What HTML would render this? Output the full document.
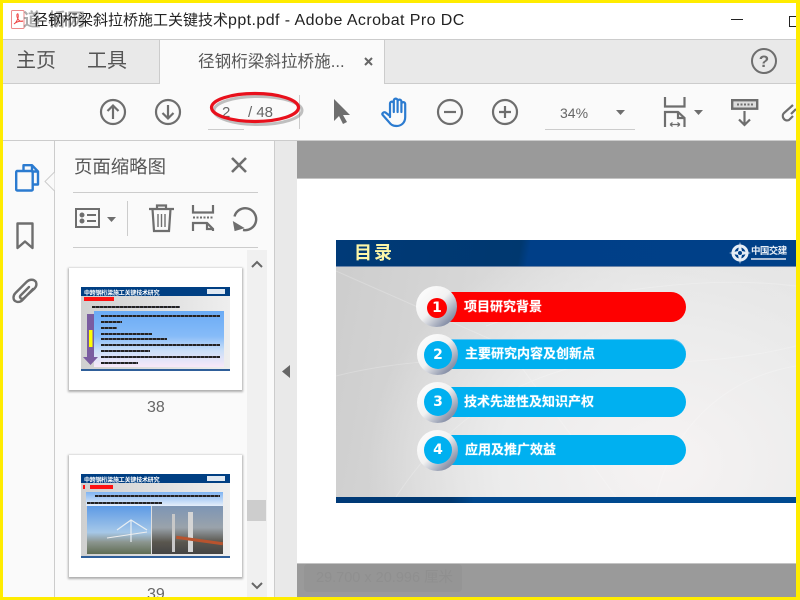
<!DOCTYPE html>
<html><head><meta charset="utf-8">
<style>
html,body{margin:0;padding:0;width:800px;height:600px;overflow:hidden;background:#fafafa}
body{position:relative;font-family:"Liberation Sans","Noto Sans CJK SC",sans-serif;color:#555}
.a{position:absolute;white-space:nowrap}
svg{position:absolute;overflow:visible}
.pill{position:absolute;left:437px;width:249px;height:30px;border-radius:15px;background:#00b0f0}
.ring{position:absolute;left:417px;width:41px;height:41px;border-radius:50%;background:linear-gradient(135deg,#fff 0,#f2f2f2 48%,#8a93aa 82%,#6f7c98 100%)}
.dot{position:absolute;left:424px;width:28px;height:28px;border-radius:50%;background:#00b0f0;color:#fff;font:bold 14px/28px "DejaVu Sans",sans-serif;text-align:center}
.pt{position:absolute;color:#fff;font-weight:bold;font-size:13px;line-height:18px;white-space:nowrap;text-shadow:0 0 1px rgba(255,255,255,.6)}
.l{position:absolute;height:2px;background:repeating-linear-gradient(90deg,#222 0,#222 3px,#556 3px,#556 4px)}
</style></head><body>

<!-- title bar -->
<div class="a" style="left:0;top:0;width:800px;height:39px;background:#fff"></div>
<svg style="left:11px;top:10px" width="14" height="19" fill="none"><rect x=".5" y=".5" width="12.5" height="18" rx="1" stroke="#ee8a8a"/><path d="M3 14C6 12 8 7 7 4C6 3 5 6 7 9C8 11 10 12 12 11C9 11 5 12 3 14Z" stroke="#e44" stroke-width="1"/></svg>
<div class="a" style="left:23px;top:8px;font-size:18px;line-height:24px;color:#777;opacity:.6;letter-spacing:1px;font-weight:bold">道 桥网</div>
<div class="a" style="left:33px;top:10px;font-size:15px;line-height:21px;color:#222">径钢桁梁斜拉桥施工关键技术<span style="font-size:16px;letter-spacing:.42px">ppt.pdf - Adobe Acrobat Pro DC</span></div>
<div class="a" style="left:731px;top:19px;width:12px;height:1px;background:#222"></div>
<div class="a" style="left:789px;top:16px;width:8px;height:9px;border:1px solid #222"></div>

<!-- tab bar -->
<div class="a" style="left:0;top:39px;width:800px;height:45px;background:#e9e9e9;border-top:1px solid #ccc;border-bottom:1px solid #ccc;box-sizing:border-box"></div>
<div class="a" style="left:159px;top:39px;width:226px;height:45px;background:#fafafa;border:1px solid #ccc;border-bottom:0;box-sizing:border-box"></div>
<div class="a" style="left:16px;top:48px;font-size:20px;line-height:26px;color:#555">主页</div>
<div class="a" style="left:87px;top:48px;font-size:20px;line-height:26px;color:#555">工具</div>
<div class="a" style="left:198px;top:51px;font-size:16.6px;line-height:22px;color:#555">径钢桁梁斜拉桥施...</div>
<svg style="left:364px;top:57px" width="9" height="9"><path d="M1 1L8 8M8 1L1 8" stroke="#666" stroke-width="2"/></svg>
<svg style="left:750px;top:47px" width="28" height="28"><circle cx="14" cy="14" r="12" fill="none" stroke="#6e6e6e" stroke-width="2"/><text x="14" y="20" font-size="17" font-weight="bold" text-anchor="middle" fill="#6e6e6e" font-family="Liberation Sans">?</text></svg>

<!-- toolbar -->
<svg style="left:100px;top:98px" width="28" height="28" fill="none" stroke="#6e6e6e" stroke-width="2.2"><circle cx="13" cy="14" r="12"/><path d="M13 21V7.5M7.5 13L13 7.5L18.5 13"/></svg>
<svg style="left:155px;top:98px" width="28" height="28" fill="none" stroke="#6e6e6e" stroke-width="2.2"><circle cx="13" cy="14" r="12"/><path d="M13 7V20.5M7.5 15L13 20.5L18.5 15"/></svg>
<div class="a" style="left:222px;top:104px;font-size:15px;line-height:18px;color:#666">2</div>
<div class="a" style="left:248px;top:104px;font-size:15px;line-height:18px;color:#666">/ 48</div>
<div class="a" style="left:208px;top:129px;width:36px;height:1px;background:#ccc"></div>
<div class="a" style="left:299px;top:95px;width:1px;height:34px;background:#ccc"></div>
<svg style="left:205px;top:88px" width="105" height="46"><ellipse cx="53" cy="22.5" rx="44" ry="14" fill="none" stroke="#666" stroke-width="3" opacity=".4"/><ellipse cx="50" cy="19.5" rx="43.5" ry="14" fill="none" stroke="#e8101c" stroke-width="3.2"/></svg>
<svg style="left:333px;top:98px" width="18" height="28"><path d="M1 1V23L6 18L10 26L14 24L10 17H17Z" fill="#6e6e6e"/></svg>
<svg style="left:381px;top:97px" width="30" height="32" fill="none" stroke="#2b7bd0" stroke-width="2.2" stroke-linecap="round" stroke-linejoin="round"><path d="M9 20V6.5a1.9 1.9 0 0 1 3.8 0V15M12.8 15V3.5a1.9 1.9 0 0 1 3.8 0V15M16.6 15V4.5a1.9 1.9 0 0 1 3.8 0V15M20.4 15V7a1.9 1.9 0 0 1 3.8 0V20C24.2 26 20 29 15.5 29C11 29 9.5 27 7.5 24.5L1.7 18C.5 16.5 2.7 14.5 4.5 15.5L9 19"/></svg>
<svg style="left:437px;top:98px" width="28" height="28" fill="none" stroke="#6e6e6e" stroke-width="2.2"><circle cx="13" cy="14" r="12"/><path d="M7 14H19"/></svg>
<svg style="left:492px;top:98px" width="28" height="28" fill="none" stroke="#6e6e6e" stroke-width="2.2"><circle cx="13" cy="14" r="12"/><path d="M7 14H19M13 8V20"/></svg>
<div class="a" style="left:560px;top:104px;font-size:14px;line-height:18px;color:#666">34%</div>
<svg style="left:616px;top:110px" width="10" height="6"><path d="M0 0H9L4.5 5Z" fill="#6e6e6e"/></svg>
<div class="a" style="left:545px;top:129px;width:90px;height:1px;background:#ccc"></div>
<svg style="left:663px;top:97px" width="24" height="32" fill="none" stroke="#6e6e6e" stroke-width="2.2"><path d="M2 0V9.5H21.5V0M2 30V15H15L21.5 21V30"/><path d="M15 15V21H21.5"/><path d="M7 27.5H17M7 27.5L9.5 25.5M7 27.5L9.5 29.5M17 27.5L14.5 25.5M17 27.5L14.5 29.5" stroke-width="1.2"/></svg>
<svg style="left:694px;top:110px" width="10" height="6"><path d="M0 0H9L4.5 5Z" fill="#6e6e6e"/></svg>
<svg style="left:731px;top:99px" width="28" height="28"><rect x="1.2" y="1.2" width="25" height="8.5" fill="#ddd" stroke="#6e6e6e" stroke-width="2.4"/><path d="M6 5.5H22" stroke="#6e6e6e" stroke-width="2" stroke-dasharray="2 1.5"/><path d="M13.5 12V26M8 20.5L13.5 26L19 20.5" fill="none" stroke="#6e6e6e" stroke-width="2.2"/></svg>
<svg style="left:781px;top:98px" width="16" height="28" fill="none" stroke="#6e6e6e" stroke-width="2.2"><path d="M12 7L3 15C0 18 3 24 8 22L12 18"/><path d="M10 16L15 11"/></svg>

<div class="a" style="left:0;top:140px;width:800px;height:1px;background:#ccc"></div>

<!-- left rail -->
<div class="a" style="left:54px;top:141px;width:1px;height:459px;background:#ccc"></div>
<svg style="left:44px;top:172px" width="11" height="20"><path d="M10.5 0L1 9.5L10.5 19" fill="#fafafa" stroke="#ccc"/></svg>
<svg style="left:15px;top:164px" width="26" height="29" fill="none" stroke="#2b7bd0" stroke-width="2.4" stroke-linejoin="round"><path d="M8.5 7V1.2H17L23 7.5V20.5H18"/><path d="M17 1.2V7.5H23"/><rect x="1.2" y="7" width="16.5" height="19.5" rx="1"/></svg>
<svg style="left:16px;top:222px" width="19" height="29" fill="none" stroke="#6e6e6e" stroke-width="2.4" stroke-linejoin="round"><path d="M1.5 1.5H16.5V26L9 19.5L1.5 26Z"/></svg>
<svg style="left:12px;top:278px" width="26" height="28" fill="none" stroke="#6e6e6e" stroke-width="2.4" stroke-linecap="round"><path d="M21 11L10.5 22C7 25.5 1.5 24 1.5 19.5C1.5 18 2 16.5 3.5 15L14.5 4C17.5 1 22 1 24 4C25 7 24 9 22.5 10.5L11.5 20.5C9.5 22 7 19.5 8.5 17.5L17 9"/></svg>

<!-- panel -->
<div class="a" style="left:74px;top:155px;font-size:18.4px;line-height:24px;color:#555">页面缩略图</div>
<svg style="left:231px;top:157px" width="16" height="16"><path d="M1 1L15 15M15 1L1 15" stroke="#6e6e6e" stroke-width="2.6"/></svg>
<div class="a" style="left:73px;top:192px;width:185px;height:1px;background:#ccc"></div>
<div class="a" style="left:73px;top:247px;width:185px;height:1px;background:#ccc"></div>
<div class="a" style="left:127px;top:201px;width:1px;height:35px;background:#ccc"></div>
<svg style="left:75px;top:207px" width="26" height="23" fill="none" stroke="#6e6e6e" stroke-width="2"><rect x="1" y="2" width="23" height="18"/><circle cx="7" cy="8" r="1.5" fill="#6e6e6e"/><circle cx="7" cy="14" r="1.5" fill="#6e6e6e"/><path d="M12 8H21M12 14H21" stroke-width="2"/></svg>
<svg style="left:107px;top:217px" width="10" height="6"><path d="M0 0H9L4.5 5Z" fill="#6e6e6e"/></svg>
<svg style="left:149px;top:204px" width="26" height="29" fill="none" stroke="#6e6e6e" stroke-width="2.2"><path d="M0 5H25M8 5V1.5H17V5M3.5 5L5 27H20L21.5 5"/><path d="M9 10V23M12.5 10V23M16 10V23" stroke-width="1.4"/></svg>
<svg style="left:191px;top:204px" width="24" height="30" fill="none" stroke="#6e6e6e" stroke-width="2.2"><path d="M2 1V8.5H22V1"/><path d="M2 27V19H16L22 25V27"/><path d="M16 19V25H22"/><path d="M2 13.5H22" stroke-dasharray="2 1.5" stroke-width="2"/></svg>
<svg style="left:231px;top:205px" width="28" height="28" fill="none" stroke="#6e6e6e" stroke-width="2.4"><path d="M3.5 11.5A11 11 0 1 1 12 25"/><path d="M2.5 17L4 25.5L12.5 23Z" fill="#6e6e6e" stroke-width="1"/></svg>

<!-- scrollbar -->
<div class="a" style="left:247px;top:250px;width:20px;height:350px;background:#f0f0f0"></div>
<svg style="left:251px;top:260px" width="12" height="8"><path d="M1 7L6 2L11 7" fill="none" stroke="#666" stroke-width="2"/></svg>
<div class="a" style="left:247px;top:500px;width:19px;height:21px;background:#cdcdcd"></div>
<svg style="left:251px;top:582px" width="12" height="8"><path d="M1 1L6 6L11 1" fill="none" stroke="#666" stroke-width="2"/></svg>

<!-- thumb 38 -->
<div class="a" style="left:69px;top:268px;width:173px;height:122px;background:#fff;box-shadow:0 1px 2px 1px rgba(0,0,0,.3)"></div>
<div class="a" style="left:81px;top:287px;width:149px;height:84px;background:linear-gradient(90deg,#d0d0d0,#eee)"></div>
<div class="a" style="left:81px;top:287px;width:149px;height:9px;background:#003f83"></div>
<div class="a" style="left:84px;top:288px;font:bold 6px/9px 'Noto Sans CJK SC',sans-serif;color:#fff;letter-spacing:-.2px">中跨钢桁梁施工关键技术研究</div>
<div class="a" style="left:207px;top:289px;width:18px;height:5px;background:#dfe8f2"></div>
<div class="a" style="left:84px;top:297px;width:30px;height:4px;background:#f11"></div>
<div class="l" style="left:92px;top:306px;width:88px"></div>
<div class="a" style="left:94px;top:311px;width:130px;height:56px;background:linear-gradient(180deg,#6aabf5 0,#86bbf8 45%,#c8def8 70%,#f8e8f8 100%)"></div>
<div class="l" style="left:101px;top:315px;width:119px"></div>
<div class="l" style="left:101px;top:321px;width:21px"></div>
<div class="l" style="left:101px;top:327px;width:16px"></div>
<div class="l" style="left:101px;top:333px;width:51px"></div>
<div class="l" style="left:101px;top:338px;width:66px"></div>
<div class="l" style="left:101px;top:344px;width:119px"></div>
<div class="l" style="left:101px;top:350px;width:49px"></div>
<div class="l" style="left:101px;top:356px;width:119px"></div>
<div class="l" style="left:101px;top:362px;width:37px"></div>
<svg style="left:83px;top:314px" width="15" height="51"><path d="M4 0H11V43H15L7.5 51L0 43H4Z" fill="#7a5ca0"/><rect x="6" y="16" width="3.5" height="17" fill="#ff0"/></svg>
<div class="a" style="left:81px;top:369px;width:149px;height:2px;background:#2f5f9a"></div>
<div class="a" style="left:147px;top:399px;font-size:16px;line-height:18px;color:#666">38</div>

<!-- thumb 39 -->
<div class="a" style="left:69px;top:455px;width:173px;height:122px;background:#fff;box-shadow:0 1px 2px 1px rgba(0,0,0,.3)"></div>
<div class="a" style="left:81px;top:474px;width:149px;height:84px;background:linear-gradient(90deg,#d0d0d0,#eee)"></div>
<div class="a" style="left:81px;top:474px;width:149px;height:9px;background:#003f83"></div>
<div class="a" style="left:84px;top:475px;font:bold 6px/9px 'Noto Sans CJK SC',sans-serif;color:#fff;letter-spacing:-.2px">中跨钢桁梁施工关键技术研究</div>
<div class="a" style="left:207px;top:476px;width:18px;height:5px;background:#dfe8f2"></div>
<div class="a" style="left:83px;top:485px;width:2px;height:4px;background:#f11"></div>
<div class="a" style="left:90px;top:485px;width:23px;height:4px;background:#f11"></div>
<div class="a" style="left:86px;top:492px;width:137px;height:14px;background:linear-gradient(180deg,#7fb4f2,#e6eefa)"></div>
<div class="l" style="left:95px;top:495px;width:125px"></div>
<div class="l" style="left:87px;top:502px;width:75px"></div>
<div class="a" style="left:87px;top:506px;width:64px;height:48px;background:linear-gradient(180deg,#5d9ae6 0,#a6c8e8 55%,#8c9690 75%,#5f6c54 100%)"></div>
<svg style="left:87px;top:506px" width="64" height="48"><path d="M30 24L44 14L60 24M44 14V36" fill="none" stroke="#e8eef2" stroke-width="1.2"/><path d="M20 32L60 26" stroke="#eee"/></svg>
<div class="a" style="left:152px;top:506px;width:71px;height:48px;background:linear-gradient(180deg,#7d95b5 0,#9aa3ab 45%,#5a574f 75%,#444 100%)"></div>
<div class="a" style="left:172px;top:514px;width:3px;height:38px;background:#c8c8c8"></div>
<div class="a" style="left:188px;top:512px;width:5px;height:40px;background:#d5d5d5"></div>
<div class="a" style="left:176px;top:539px;width:47px;height:3px;background:#b8532e;transform:rotate(8deg)"></div>
<div class="a" style="left:81px;top:556px;width:149px;height:2px;background:#2f5f9a"></div>
<div class="a" style="left:147px;top:586px;font-size:16px;line-height:18px;color:#666">39</div>

<!-- collapse strip -->
<div class="a" style="left:274px;top:141px;width:1px;height:459px;background:#ccc"></div>
<div class="a" style="left:275px;top:141px;width:22px;height:459px;background:#e9e9e9"></div>
<svg style="left:282px;top:365px" width="8" height="13"><path d="M8 0V13L0 6.5Z" fill="#666"/></svg>

<!-- doc area -->
<div class="a" style="left:297px;top:141px;width:503px;height:459px;background:#9a9a9a"></div>
<div class="a" style="left:297px;top:178px;width:503px;height:386px;background:#fff;border-top:1px solid #c4c4c4;border-bottom:1px solid #c4c4c4;box-sizing:border-box"></div>
<div class="a" style="left:304px;top:564px;width:158px;height:28px;border-radius:4px;background:#959595"></div>
<div class="a" style="left:316px;top:569px;font-size:14.5px;line-height:18px;color:#8f8f8f">29.700 x 20.996 厘米</div>

<!-- slide -->
<div class="a" style="left:336px;top:240px;width:460px;height:263px;background:radial-gradient(ellipse 300px 240px at 72% 85%,#f6f3f3 0,#ececec 55%,rgba(226,226,226,0) 100%),linear-gradient(100deg,#cdcdcd 0,#d6d6d6 25%,#e2e2e2 60%,#e4e4e4 100%)"></div>
<svg style="left:336px;top:266px" width="460" height="231" fill="none" stroke="#fff" stroke-opacity=".22"><path d="M0 5L170 80L280 231M150 60C260 20 380 10 460 20M0 110C160 70 300 120 460 80M60 231C120 140 200 100 300 90M320 231C340 150 400 110 460 100"/></svg>
<div class="a" style="left:336px;top:240px;width:460px;height:27px;background:linear-gradient(100deg,#003a78 0,#00386f 40%,#003f88 42%,#004088 100%);border-bottom:1px solid #6b84a8;box-sizing:border-box"></div>
<div class="a" style="left:336px;top:497px;width:460px;height:6px;background:linear-gradient(90deg,#003a78 0,#00386f 25%,#00488e 30%,#004a90 100%)"></div>
<div class="a" style="left:354px;top:242px;font-size:18px;font-weight:bold;line-height:22px;letter-spacing:2px;color:#fdf6a8">目录</div>
<svg style="left:729px;top:242px" width="22" height="22"><circle cx="11" cy="11" r="7" fill="none" stroke="#e6edf5" stroke-width="3"/><path d="M11 0L13 9L22 11L13 13L11 22L9 13L0 11L9 9Z" fill="#e6edf5"/><circle cx="11" cy="11" r="2" fill="#004088"/></svg>
<div class="a" style="left:751px;top:246px;font-size:9.5px;line-height:12px;font-weight:bold;color:#e6edf5;letter-spacing:-.6px">中国交建</div>
<div class="a" style="left:751px;top:258px;width:35px;height:2px;background:#aebfd6"></div>

<div class="pill" style="top:292px;background:#fe0000"></div>
<div class="ring" style="top:286px;left:416px"></div>
<div class="dot" style="left:427px;top:298px;width:20px;height:20px;line-height:20px;background:#fe0000">1</div>
<div class="pt" style="left:464px;top:298px">项目研究背景</div>

<div class="pill" style="top:339px;box-shadow:inset 0 1px 0 #5cc4f4"></div>
<div class="ring" style="top:334px"></div>
<div class="dot" style="top:341px">2</div>
<div class="pt" style="left:465px;top:345px">主要研究内容及创新点</div>

<div class="pill" style="top:387px"></div>
<div class="ring" style="top:382px"></div>
<div class="dot" style="top:388px">3</div>
<div class="pt" style="left:464px;top:393px">技术先进性及知识产权</div>

<div class="pill" style="top:435px"></div>
<div class="ring" style="top:430px"></div>
<div class="dot" style="top:436px">4</div>
<div class="pt" style="left:465px;top:441px">应用及推广效益</div>

<!-- yellow frame -->
<div class="a" style="left:0;top:0;width:800px;height:3px;background:#ffec00"></div>
<div class="a" style="left:0;top:597px;width:800px;height:3px;background:#ffec00"></div>
<div class="a" style="left:0;top:0;width:3px;height:600px;background:#ffec00"></div>
<div class="a" style="left:796px;top:0;width:4px;height:600px;background:#ffec00"></div>
</body></html>
